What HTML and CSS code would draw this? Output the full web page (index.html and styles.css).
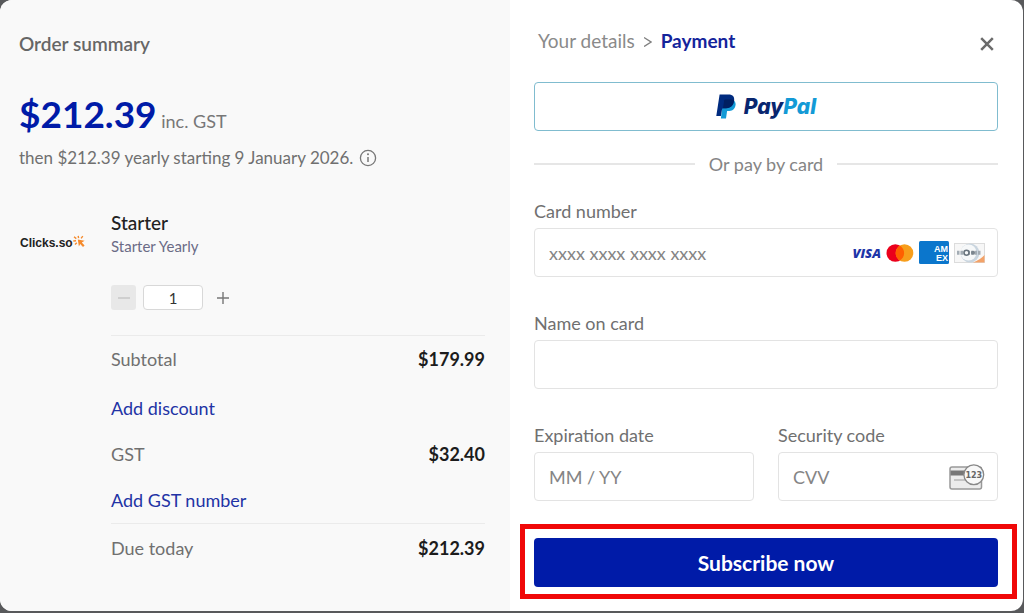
FILE: index.html
```html
<!DOCTYPE html>
<html lang="en">
<head>
<meta charset="utf-8">
<meta name="viewport" content="width=device-width, initial-scale=1">
<title>Checkout</title>
<link rel="stylesheet" href="styles.css">
</head>
<body>
<main class="modal">
  <section class="summary">
    <h1 class="summary-title">Order summary</h1>
    <p class="price"><strong class="price-amount">$212.39</strong> <span class="price-tax">inc. GST</span></p>
    <p class="renewal">then $212.39 yearly starting 9 January 2026.
      <svg class="info-icon" viewBox="0 0 18 18" aria-hidden="true"><circle cx="9" cy="9" r="7.6" fill="none" stroke="#777" stroke-width="1.3"/><path d="M9 8v5" stroke="#777" stroke-width="1.5"/><circle cx="9" cy="5.3" r="1" fill="#777"/></svg>
    </p>
    <div class="order">
      <div class="brand">
        <span class="brand-name">Clicks.so</span>
        <svg class="brand-mark" viewBox="0 0 13 13" aria-hidden="true"><path d="M4.8 4.6L11.6 5.8 8.8 7.5 11.6 10.6 10 12 7.2 9 5.9 11.5z" fill="#f58a2c"/><path d="M5.2.8l.4 2.4M1 1.8l2.3 1.8M.3 6l2.8-.3M9.8 1.1L8.1 3.4M2 9.6l1.8-1.8" stroke="#f58a2c" stroke-width="1.4" fill="none"/></svg>
      </div>
      <div class="order-body">
        <h2 class="product">Starter</h2>
        <p class="plan">Starter Yearly</p>
        <div class="stepper">
          <button class="step step-minus" type="button" aria-label="Decrease quantity" disabled><svg viewBox="0 0 14 14" aria-hidden="true"><path d="M1 7h12" stroke="#c4c4c4" stroke-width="1.4"/></svg></button>
          <input class="quantity" type="text" value="1" aria-label="Quantity">
          <button class="step" type="button" aria-label="Increase quantity"><svg viewBox="0 0 14 14" aria-hidden="true"><path d="M1 7h12M7 1v12" stroke="#777" stroke-width="1.4"/></svg></button>
        </div>
        <div class="totals">
          <div class="row subtotal"><span>Subtotal</span><strong>$179.99</strong></div>
          <a class="link" href="#discount">Add discount</a>
          <div class="row"><span>GST</span><strong>$32.40</strong></div>
          <a class="link" href="#gst">Add GST number</a>
        </div>
        <div class="row due"><span>Due today</span><strong>$212.39</strong></div>
      </div>
    </div>
  </section>

  <section class="payment">
    <header class="payment-header">
      <nav class="crumbs" aria-label="Checkout steps">
        <a class="crumb" href="#details">Your details</a>
        <svg class="chevron" viewBox="0 0 8 12" aria-hidden="true"><path d="M0 2.5L7 7 0 11.5" fill="none" stroke="#808080" stroke-width="1.4"/></svg>
        <span class="crumb-current">Payment</span>
      </nav>
      <button class="close" type="button" aria-label="Close"><svg viewBox="0 0 14 14" aria-hidden="true"><path d="M1.2 1.2l11.6 11.6M12.8 1.2l-11.6 11.6" stroke="#6c6c6c" stroke-width="2.5"/></svg></button>
    </header>

    <button class="paypal" type="button" aria-label="PayPal">
      <svg class="paypal-mark" viewBox="0 0 20 25" aria-hidden="true">
        <path d="M7 6H17.3Q20.4 8 19.4 11.8C18.5 15.8 15.5 17.1 12.3 17.1H11.1L10 24.4H4.9z" fill="#139ad6"/>
        <path d="M3.6.5H12.4C17 .5 18.9 3 18 7.3 17 12.3 13.8 14.3 9.7 14.3H7.2Q6.2 14.3 6 15.4L4.9 22H.3z" fill="#002b7f"/>
        <path d="M8.2 6.2Q8.4 5.4 9.2 5.4H15Q16.8 5.4 18.2 6 17.2 14.3 9.7 14.3H7z" fill="#001f61"/>
      </svg>
      <span class="paypal-name">Pay<span class="paypal-pal">Pal</span></span>
    </button>

    <div class="divider"><span>Or pay by card</span></div>

    <form class="form" action="#">
      <div class="field">
        <label for="card">Card number</label>
        <div class="control">
          <input id="card" class="input" type="text" placeholder="xxxx xxxx xxxx xxxx">
          <div class="cards" aria-hidden="true">
            <span class="visa">VISA</span>
            <svg class="mastercard" viewBox="0 0 28 18"><circle cx="9.3" cy="9" r="8.8" fill="#eb001b"/><circle cx="18.5" cy="9" r="8.8" fill="#f79e1b"/><path d="M13.9 1.5a8.8 8.8 0 0 1 0 15 8.8 8.8 0 0 1 0-15z" fill="#ff5f00"/></svg>
            <svg class="amex" viewBox="0 0 30 23"><rect width="30" height="23" rx="1.5" fill="#0b76cc"/><text class="amex-text" x="29" y="11.4">AM</text><text class="amex-text" x="29" y="19.6">EX</text></svg>
            <svg class="diners" viewBox="0 0 31 20"><rect x=".5" y=".5" width="30" height="19" fill="#f7f7f7" stroke="#dcdcdc"/><path d="M19 19.5Q26 17 30.5 12v7.5z" fill="#f3a268"/><circle cx="16" cy="10" r="9.4" fill="#c9d5df"/><circle cx="14.5" cy="9.5" r="8" fill="#f6f8f9"/><path d="M3 9.7h24" stroke="#a3acb4" stroke-width="4" stroke-dasharray="2.5 1"/><circle cx="12.5" cy="9.7" r="2.5" fill="#f6f8f9" stroke="#68737d" stroke-width="1.6"/><circle cx="19" cy="9.7" r="2" fill="#7b858e"/></svg>
          </div>
        </div>
      </div>
      <div class="field">
        <label for="name">Name on card</label>
        <div class="control"><input id="name" class="input" type="text"></div>
      </div>
      <div class="pair">
        <div class="field">
          <label for="expiry">Expiration date</label>
          <div class="control"><input id="expiry" class="input" type="text" placeholder="MM / YY"></div>
        </div>
        <div class="field">
          <label for="cvv">Security code</label>
          <div class="control">
            <input id="cvv" class="input" type="text" placeholder="CVV">
            <svg class="cvv-icon" viewBox="0 0 36 26" aria-hidden="true"><rect x="1" y="3" width="31.5" height="22" rx="2" fill="#ececec" stroke="#999" stroke-width="1.5"/><path d="M1.5 6.5h20v5h-20z" fill="#777"/><path d="M5 16h13" stroke="#aaa" stroke-width="1.2"/><circle cx="24.8" cy="10.8" r="9.9" fill="#f8f8f8" stroke="#888" stroke-width="1.3"/><text class="cvv-text" x="24.8" y="13.6">123</text></svg>
          </div>
        </div>
      </div>
      <button class="submit" type="submit">Subscribe now</button>
    </form>
  </section>
</main>
</body>
</html>
```
FILE: styles.css
```css
* { box-sizing: border-box; }

body {
  margin: 0;
  min-height: 100vh;
  display: grid;
  padding: 0 1px 2px 0;
  background: #58595b;
  color: #707070;
  font: 18px/24px Lato, sans-serif;
}

h1, h2, p { margin: 0; font-size: inherit; }

button, input { font: inherit; color: inherit; }

button { padding: 0; border: 0; background: none; }

svg { display: block; flex: none; }

.modal {
  display: grid;
  grid-template-columns: minmax(0, 510fr) minmax(0, 513fr);
  overflow: hidden;
  border-radius: 12px;
  background: #fff;
}

.summary { padding: 32px 25px 24px 19px; background: #f9f9f9; }

.summary-title { font-size: 19px; font-weight: 600; color: #666; }

.price { margin-top: 34px; line-height: 48px; color: #777; }

.price-amount { font-size: 37px; font-weight: 700; color: #001ba8; }

.renewal {
  display: flex;
  align-items: center;
  gap: 6px;
  margin-top: 1px;
  font-size: 17px;
}

.info-icon { width: 18px; height: 18px; }

.order {
  display: grid;
  grid-template-columns: 68px 1fr;
  gap: 24px;
  margin-top: 41px;
}

.brand { display: flex; align-items: start; padding: 20px 0 0 1px; }

.brand-name { font: bold 12px/24px "Liberation Sans", sans-serif; color: #222; }

.brand-mark { width: 13px; height: 13px; margin-top: 4px; }

.product { font-size: 19px; font-weight: 500; color: #222; }

.plan { font-size: 15px; line-height: 22px; color: #6b6b86; }

.stepper { display: flex; align-items: center; gap: 7px; margin-top: 28px; }

.step {
  display: grid;
  place-items: center;
  width: 25px;
  height: 25px;
  border-radius: 3px;
}

.step svg { width: 14px; height: 14px; }

.step-minus { background: #e8e8e8; }

.quantity {
  width: 60px;
  height: 25px;
  padding: 0;
  border: 1px solid #d8d8d8;
  border-radius: 4px;
  background: #fff;
  color: #333;
  font-size: 15px;
  text-align: center;
}

.totals {
  display: grid;
  gap: 22px;
  margin-top: 25px;
  padding: 11px 0;
  border-top: 1px solid #ebebeb;
}

.row { display: flex; justify-content: space-between; }

.row strong { font-weight: 700; color: #1c1c1c; }

.subtotal { padding-bottom: 3px; }

.link { color: #2233a5; text-decoration: none; }

.due { padding-top: 12px; border-top: 1px solid #ebebeb; }

.payment { padding: 29px 25px 24px 24px; }

.payment-header {
  display: flex;
  justify-content: space-between;
  align-items: flex-end;
  padding: 0 4px;
  font-size: 19px;
}

.crumbs { display: flex; align-items: center; gap: 9px; }

.crumb { color: #8a8a8a; text-decoration: none; }

.crumb-current { font-weight: 700; color: #14249b; }

.chevron { width: 8px; height: 12px; }

.close { padding: 2px 0; }

.close svg { width: 14px; height: 14px; }

.paypal {
  display: flex;
  justify-content: center;
  align-items: center;
  gap: 8px;
  width: 100%;
  height: 49px;
  margin-top: 29px;
  border: 1px solid #80bccf;
  border-radius: 4px;
}

.paypal-mark { width: 20px; height: 25px; }

.paypal-name { font: italic 800 21px/24px Inter, sans-serif; color: #08266f; }

.paypal-pal { color: #139ad6; }

.divider {
  display: flex;
  align-items: center;
  gap: 14px;
  margin-top: 21px;
  color: #858585;
}

.divider::before, .divider::after {
  content: "";
  flex: 1;
  height: 2px;
  background: #e6e6e6;
}

.form {
  display: grid;
  grid-template-columns: minmax(0, 1fr);
  gap: 34px;
  margin-top: 23px;
}

.field { display: grid; grid-template-columns: minmax(0, 1fr); gap: 5px; }

.control {
  display: flex;
  align-items: center;
  height: 49px;
  padding: 0 12px 0 14px;
  border: 1px solid #e3e3e3;
  border-radius: 4px;
}

.input {
  flex: 1;
  min-width: 0;
  height: 100%;
  padding: 0;
  border: 0;
  outline: 0;
  background: none;
}

.input::placeholder { color: #858585; opacity: 1; }

.cards { display: flex; align-items: center; gap: 5px; }

.visa { font: italic 800 13px/18px "Open Sans", sans-serif; color: #1d35a8; }

.mastercard { width: 28px; height: 18px; }

.amex { width: 30px; height: 23px; }

.amex-text { font: bold 9px "Liberation Sans", sans-serif; fill: #fff; text-anchor: end; }

.diners { width: 31px; height: 20px; }

.pair {
  display: grid;
  grid-template-columns: repeat(2, minmax(0, 1fr));
  gap: 24px;
}

.cvv-icon { width: 36px; height: 26px; }

.cvv-text { font: bold 8px "DejaVu Sans", sans-serif; fill: #666; text-anchor: middle; }

.submit {
  position: relative;
  height: 49px;
  margin-top: 3px;
  border-radius: 4px;
  background: #001ba8;
  color: #fff;
  font-size: 21px;
  font-weight: 700;
}

/* Highlight frame drawn over the space around the button */
.submit::after {
  content: "";
  position: absolute;
  inset: -14px -19px -12px -14px;
  border: 5px solid #f00808;
  pointer-events: none;
}
```
